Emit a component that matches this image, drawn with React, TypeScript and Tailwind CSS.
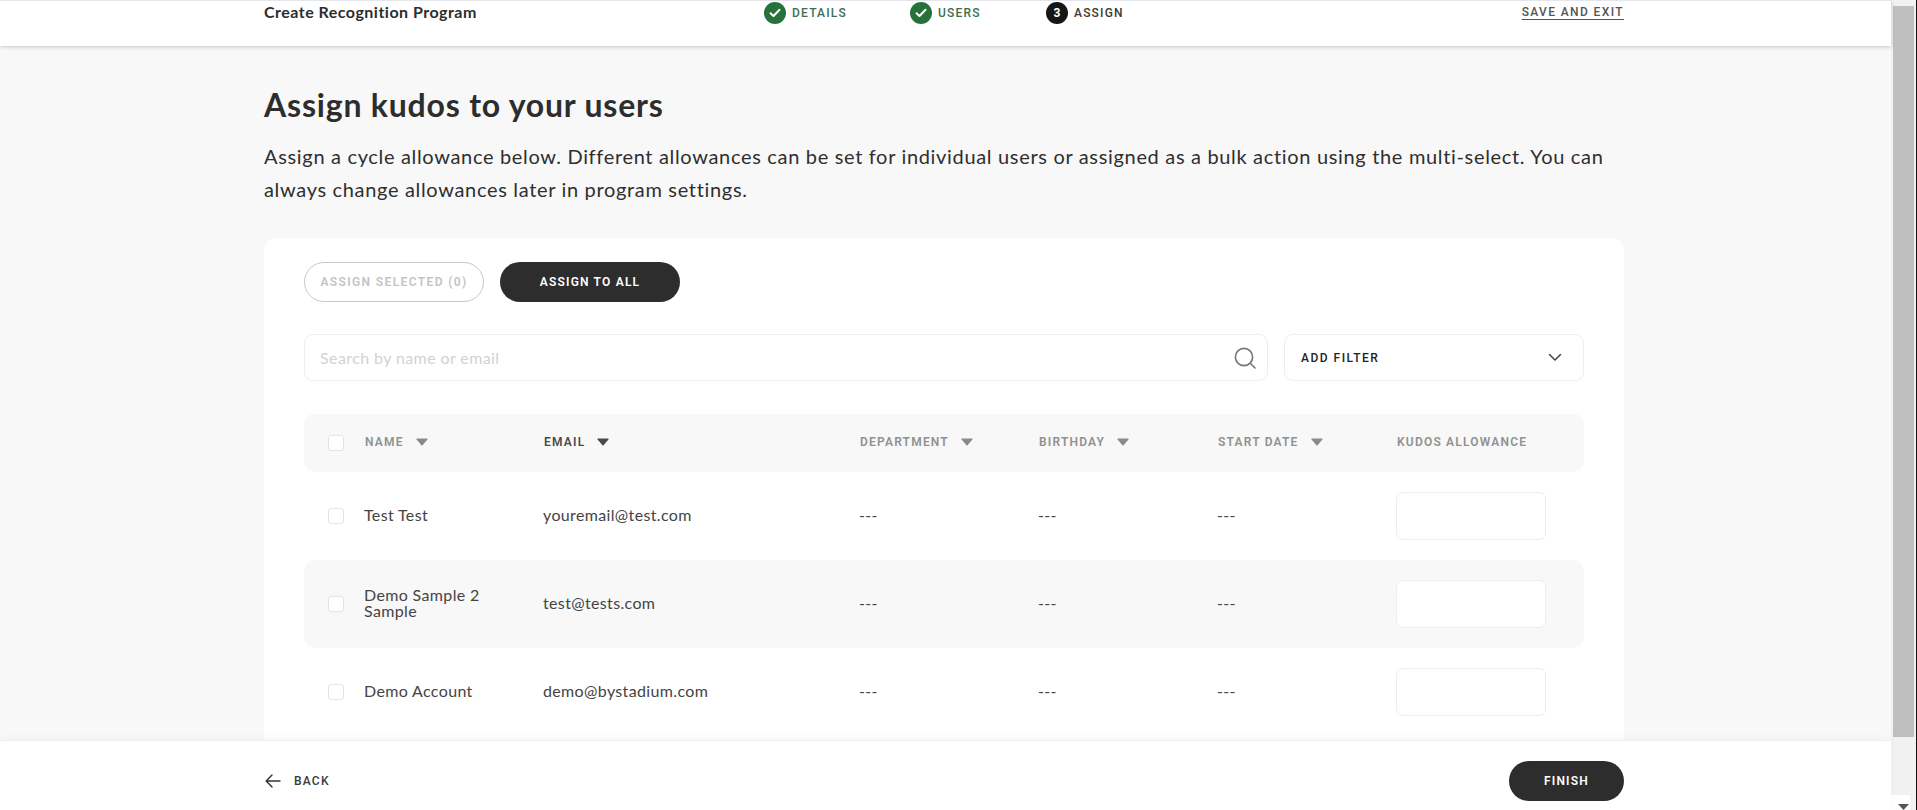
import React from "react";

const body = "font-['Lato','Noto_Sans',sans-serif]";
const caps = "font-['Roboto','Liberation_Sans',sans-serif] uppercase";

function SortArrow({ dark }: { dark?: boolean }) {
  return (
    <svg width="12" height="8" viewBox="0 0 12 8" className={dark ? "text-[#4a4a4a]" : "text-[#8a8a8a]"}>
      <path d="M1.2 0.5H10.8C11.5 0.5 11.8 1.2 11.4 1.8L9.9 3.2L6.6 7.2C6.3 7.6 5.7 7.6 5.4 7.2L2.1 3.2L0.6 1.8C0.2 1.2 0.5 0.5 1.2 0.5Z" fill="currentColor" />
    </svg>
  );
}

function Check() {
  return <div className="w-[16px] h-[16px] bg-white border border-[#e4e4e4] rounded-[3px]" />;
}

function Step({ label, n, w }: { label: string; n?: number; w: string }) {
  const done = n === undefined;
  return (
    <div className={`flex items-center gap-[6px] ${w}`}>
      <div className={`w-[22px] h-[22px] rounded-full flex items-center justify-center ${done ? "bg-[#28713c]" : "bg-[#161616]"}`}>
        {done ? (
          <svg width="12" height="10" viewBox="0 0 12 10" fill="none">
            <path d="M1.5 5.2L4.5 8L10.5 1.8" stroke="white" strokeWidth="2" strokeLinecap="round" strokeLinejoin="round" />
          </svg>
        ) : (
          <span className={`${caps} text-white text-[12px] font-bold`}>{n}</span>
        )}
      </div>
      <span className={`${caps} text-[12px] font-medium tracking-[0.1em] ${done ? "text-[#3f6e50]" : "text-[#3a3a3a]"}`}>{label}</span>
    </div>
  );
}

function Head({ label, arrow = true, dark }: { label: string; arrow?: boolean; dark?: boolean }) {
  return (
    <div className="flex items-center gap-[12px] pl-px pb-[2px]">
      <span className={`${caps} text-[12px] font-semibold tracking-[0.1em] ${dark ? "text-[#4a4a4a]" : "text-[#8f918f]"}`}>{label}</span>
      {arrow && <SortArrow dark={dark} />}
    </div>
  );
}

const cols = "grid grid-cols-[60px_179px_316px_179px_179px_179px_187px] items-center rounded-[10px]";

function Row({ name, email, shaded }: { name: string; email: string; shaded?: boolean }) {
  return (
    <div className={`${cols} h-[88px] ${shaded ? "bg-[#f8f8f8]" : ""} ${body} text-[16px] tracking-[0.022em] text-[#444444]`}>
      <div className="pl-[24px]"><Check /></div>
      <div className="leading-[16px] pr-[30px] pb-[2px]">{name}</div>
      <div className="pb-[2px]">{email}</div>
      <div className="pb-[2px]">---</div>
      <div className="pb-[2px]">---</div>
      <div className="pb-[2px]">---</div>
      <div><div className="w-[150px] h-[48px] bg-white border border-[#ededed] rounded-[7px]" /></div>
    </div>
  );
}

export default function App() {
  return (
    <div className={`relative flex h-[810px] w-full overflow-hidden bg-[#f1f1f1] ${body}`}>
      <div className="flex flex-col w-[1891px] h-full">
        <header className="relative z-10 h-[46px] shrink-0 bg-white border-t border-[#e3e7ec] shadow-[0_1px_4px_rgba(0,0,0,0.2)] pl-[264px] pr-[267px]">
          <div className="flex items-center h-[22px] mt-px">
            <div className="w-[500px] -mt-[2px] text-[16px] font-bold tracking-[0.03em] text-[#2d2d2d]">Create Recognition Program</div>
            <Step label="Details" w="w-[146px]" />
            <Step label="Users" w="w-[136px]" />
            <Step label="Assign" n={3} w="w-[120px]" />
            <a className={`${caps} ml-auto -mt-[2px] text-[12px] font-medium tracking-[0.115em] underline underline-offset-[3px] text-[#555555]`}>Save and exit</a>
          </div>
        </header>

        <main className="flex-1 min-h-0 overflow-hidden bg-[#f8f8f8] pl-[264px]">
          <div className="w-[1360px]">
            <h1 className="mt-[39px] h-[40px] leading-[40px] text-[32px] font-bold tracking-[0.025em] text-[#2d2d2d]">Assign kudos to your users</h1>
            <p className="mt-[15px] text-[20px] leading-[33px] tracking-[0.0335em] text-[#2f2f2f]">
              Assign a cycle allowance below. Different allowances can be set for individual users or assigned as a bulk action using the multi-select. You can always change allowances later in program settings.
            </p>
            <section className="mt-[32px] bg-white rounded-[12px] pt-[24px] px-[40px] h-[600px]">
              <div className="flex gap-[16px]">
                <button className={`${caps} w-[180px] h-[40px] rounded-full border border-[#c8c8c8] text-[#c4c4c4] text-[12px] font-semibold tracking-[0.115em]`}>Assign selected (0)</button>
                <button className={`${caps} w-[180px] h-[40px] rounded-full bg-[#2d2d2d] text-white text-[12px] font-semibold tracking-[0.1em]`}>Assign to all</button>
              </div>
              <div className="flex gap-[16px] mt-[32px]">
                <div className="flex items-center w-[964px] h-[47px] border border-[#eeeeee] rounded-[9px] pl-[15px] pr-[10px]">
                  <span className="flex-1 text-[16px] tracking-[0.025em] text-[#d2d2d2]">Search by name or email</span>
                  <svg width="24" height="24" viewBox="0 0 24 24" fill="none" stroke="#71767a" strokeWidth="1.6" strokeLinecap="round">
                    <circle cx="11" cy="11" r="8.6" />
                    <path d="M17.5 17.5L22 22" />
                  </svg>
                </div>
                <div className="flex items-center justify-between w-[300px] h-[47px] border border-[#eeeeee] rounded-[9px] pl-[16px] pr-[21px]">
                  <span className={`${caps} text-[12px] font-medium tracking-[0.125em] text-[#222222]`}>Add filter</span>
                  <svg width="14" height="9" viewBox="0 0 14 9" fill="none" stroke="#3e454b" strokeWidth="1.5" strokeLinecap="round" strokeLinejoin="round">
                    <path d="M1.5 1.5L7 7L12.5 1.5" />
                  </svg>
                </div>
              </div>
              <div className="mt-[33px]">
                <div className={`${cols} h-[58px] bg-[#f8f8f8]`}>
                  <div className="pl-[24px]"><Check /></div>
                  <Head label="Name" />
                  <Head label="Email" dark />
                  <Head label="Department" />
                  <Head label="Birthday" />
                  <Head label="Start date" />
                  <Head label="Kudos allowance" arrow={false} />
                </div>
                <Row name="Test Test" email="youremail@test.com" />
                <Row name="Demo Sample 2 Sample" email="test@tests.com" shaded />
                <Row name="Demo Account" email="demo@bystadium.com" />
              </div>
            </section>
          </div>
        </main>

        <footer className="relative z-10 h-[70px] shrink-0 bg-white border-t border-[#efefef] shadow-[0_-2px_8px_rgba(0,0,0,0.03)] pt-[10px] pl-[265px] pr-[267px] flex items-center justify-between">
          <div className="flex items-center gap-[13px]">
            <svg width="16" height="14" viewBox="0 0 16 14" fill="none" stroke="#333333" strokeWidth="1.4" strokeLinecap="round" strokeLinejoin="round">
              <path d="M7 1L1.2 7L7 13M1.2 7H15" />
            </svg>
            <span className={`${caps} text-[12px] font-medium tracking-[0.1em] text-[#3a3a3a]`}>Back</span>
          </div>
          <button className={`${caps} w-[115px] h-[40px] rounded-full bg-[#2d2d2d] text-white text-[12px] font-semibold tracking-[0.1em]`}>Finish</button>
        </footer>
      </div>

      <div className="w-[25px] h-full pt-[6px] pl-[2px]">
        <div className="w-[21px] h-[731px] bg-[#bfbfbf]" />
      </div>
      <div className="w-px h-full bg-[#111111]" />

      <div className="absolute left-[1840px] top-[793px] w-[72px] h-[30px] bg-white border-[2px] border-[#f1f1f1]" />
      <div className="absolute left-[1850px] top-[808px] w-[6px] h-[2px] bg-[#e6e6e6]" />
      <svg className="absolute left-[1898px] top-[804px]" width="11" height="6" viewBox="0 0 11 6">
        <path d="M0 0H11L5.5 6Z" fill="#555555" />
      </svg>
    </div>
  );
}
